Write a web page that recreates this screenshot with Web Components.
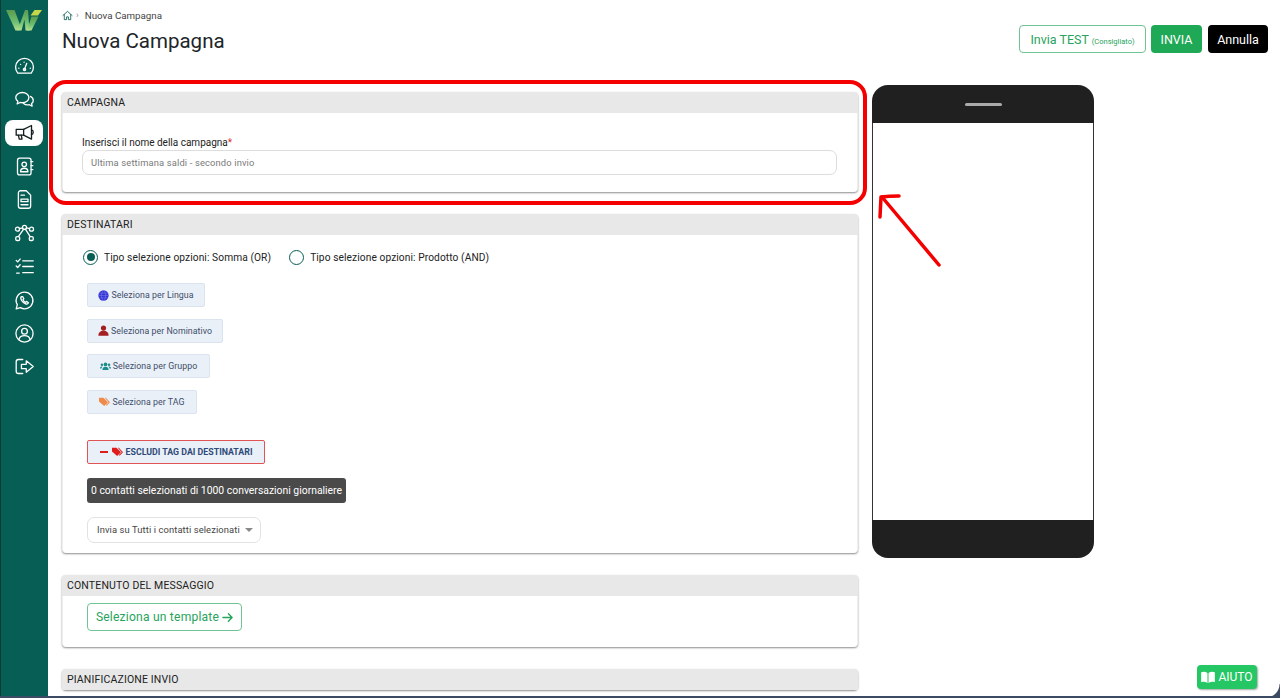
<!DOCTYPE html>
<html lang="it">
<head>
<meta charset="utf-8">
<title>Nuova Campagna</title>
<style>
  html, body { margin: 0; padding: 0; height: 698px; overflow: hidden; background: #fff; font-family: Roboto, "Liberation Sans", sans-serif; }
</style>
</head>
<body>
<app-shell>
  <side-nav slot="nav"></side-nav>
  <page-head></page-head>
  <div class="columns" style="display:flex;align-items:flex-start;gap:14px;">
    <div style="width:796px;flex:none;display:flex;flex-direction:column;gap:22px;padding-top:14px;">
      <ui-card title="CAMPAGNA"><campaign-name></campaign-name></ui-card>
      <ui-card title="DESTINATARI"><recipients-panel></recipients-panel></ui-card>
      <ui-card title="CONTENUTO DEL MESSAGGIO"><template-pick></template-pick></ui-card>
      <ui-card title="PIANIFICAZIONE INVIO"></ui-card>
    </div>
    <phone-preview></phone-preview>
  </div>
  <red-marks></red-marks>
  <help-button></help-button>
</app-shell>

<script>
class AppShell extends HTMLElement {
  constructor() {
    super();
    this.attachShadow({mode: 'open'}).innerHTML = `
      <style>
        :host { display: flex; width: 1280px; height: 698px; position: relative; overflow: hidden; background: #fff; }
        .nav { flex: none; width: 48px; }
        main { flex: 1; min-width: 0; padding: 0 12px 0 14px; height: 698px; overflow: hidden; }
        .edge { position: absolute; left: 0; right: 0; bottom: 0; height: 2px; background: #3c4a63; }
        .corner { position: absolute; right: 0; bottom: 0; width: 14px; height: 14px; background: #3c4a63; -webkit-mask: radial-gradient(circle at 0 0, transparent 13px, #000 14px); mask: radial-gradient(circle at 0 0, transparent 13px, #000 14px); }
      </style>
      <div class="nav"><slot name="nav"></slot></div>
      <main><slot></slot></main>
      <div class="edge"></div><div class="corner"></div>`;
  }
}

const NAV_ICONS = [
  // tachimetro
  '<path d="M4.300 19.500a10.200 10.200 0 1 1 15.400 0z"/><path d="M12 15l2.500-6.500"/><circle cx="12" cy="15.500" r="1.300"/><path d="M5.500 14h.1M7.500 9.500h.1M11.500 7h.1M18.500 14h.1"/>',
  // chat
  '<path d="M9.500 4c-4.200 0-7.500 2.600-7.500 5.800 0 1.700.9 3.200 2.400 4.300L3.600 17l3.400-1.600c.8.2 1.600.3 2.500.3 4.200 0 7.500-2.600 7.500-5.900S13.700 4 9.500 4z"/><path d="M18.800 8.500c1.900 1 3.200 2.600 3.200 4.500 0 1.400-.7 2.700-1.900 3.600l.6 3-3.200-1.600c-2.300.5-5 0-6.500-1.500"/>',
  // megafono
  '<path d="M2.500 8.500h8.500v6.500H2.500z"/><path d="M11 8.500L20 4v15.500L11 15"/><path d="M20 9c1.300.3 2 1.400 2 2.700s-.7 2.400-2 2.700"/><path d="M5 15l1 4.500h3.200L8.300 15"/>',
  // rubrica
  '<rect x="4" y="2.500" width="15.500" height="19" rx="2.500"/><circle cx="11.700" cy="9.500" r="2.600"/><path d="M7.500 18c0-2.800 1.800-4 4.200-4s4.200 1.200 4.200 4z"/><path d="M19.500 6.500h2M19.500 11h2M19.500 15.500h2"/>',
  // documento
  '<path d="M5 4.500A2.500 2.500 0 0 1 7.500 2H14l5 5v12.500a2.500 2.500 0 0 1-2.500 2.500h-9A2.500 2.500 0 0 1 5 19.500z"/><path d="M8 7h4M8 11.500h8v3H8zM8 18h8"/>',
  // rete
  '<circle cx="4" cy="7" r="2.300"/><circle cx="12" cy="5" r="2.300"/><circle cx="20" cy="7" r="2.300"/><rect x="2" y="15.500" width="4.500" height="4.500" rx="1.500"/><rect x="17.500" y="15.500" width="4.500" height="4.500" rx="1.500"/><path d="M6.200 6.500l3.600-1M14.200 5.500l3.600 1M13 7l5.500 8.500M11 7l-6 8.500"/>',
  // checklist
  '<path d="M2.500 5l1.700 1.700L7 3.500M2.500 11.500l1.700 1.700L7 10M3 19.500h3"/><path d="M10 5.500h12M10 12h12M10 19h12"/>',
  // whatsapp
  '<path d="M12 2.500a9.500 9.500 0 0 0-8.200 14.300L2.500 21.500l4.800-1.300A9.500 9.500 0 1 0 12 2.500z"/><path d="M8.500 7.500c-1 1-1 2.600.2 4.500 1.200 2 3 3.500 5 4 1.300.3 2.300-.2 2.800-1.500l-2.200-1.500-1 1c-1.200-.4-2.500-1.700-3-3l.9-1-1.300-2.500z"/>',
  // profilo
  '<circle cx="12" cy="12" r="9.800"/><circle cx="12" cy="9.500" r="3.300"/><path d="M5.500 19c.8-3 3.300-4.500 6.500-4.500s5.700 1.500 6.500 4.500"/>',
  // esci
  '<path d="M10 4H5a2.500 2.500 0 0 0-2.500 2.500v11A2.500 2.500 0 0 0 5 20h5"/><path d="M8.500 9.500h5.500V5.500l8 6.500-8 6.500v-4H8.500z"/>'
];

class SideNav extends HTMLElement {
  constructor() {
    super();
    const items = NAV_ICONS.map((d, i) => `
      <div class="item ${i === 2 ? 'on' : ''}"><svg viewBox="0 0 24 24" width="21" height="21">${d}</svg></div>`).join('');
    this.attachShadow({mode: 'open'}).innerHTML = `
      <style>
        :host { display: block; width: 48px; height: 698px; box-sizing: border-box; background: #075e54; border-left: 1px solid #0c3a35; }
        .logo { height: 33px; padding: 9px 0 0 5px; box-sizing: border-box; }
        .list { display: flex; flex-direction: column; align-items: center; padding-top: 20px; gap: 0; margin-left: -1px; }
        .item { width: 38px; height: 26px; display: flex; align-items: center; justify-content: center; border-radius: 8px; margin-bottom: 7.450px; }
        .item.on { background: #fff; }
        svg { fill: none; stroke: #fff; stroke-width: 1.500; stroke-linecap: round; stroke-linejoin: round; }
        .on svg { stroke: #12201d; }
      </style>
      <div class="logo">
        <svg viewBox="0 0 36 22" width="36" height="22" style="stroke:none;display:block">
          <defs><linearGradient id="g" x1="0" y1="0" x2="0" y2="1">
            <stop offset="0" stop-color="#5a9a4e"/><stop offset=".6" stop-color="#6fbf72"/><stop offset="1" stop-color="#b4e08c"/></linearGradient></defs>
          <path fill="url(#g)" d="M0 1h8.500l6 16-2 4.500h-3z"/>
          <path fill="url(#g)" d="M11.500 21.500l7.500-20.500h3l1.500 20.500h-4l-1-11-3 11z"/>
          <path fill="url(#g)" d="M21 21.500h4.500l7-14h-7z"/>
          <path fill="#c4d84a" d="M28.500 1h7.500l-4 5.500h-7.500z"/>
        </svg>
      </div>
      <div class="list">${items}</div>`;
  }
}

class PageHead extends HTMLElement {
  constructor() {
    super();
    this.attachShadow({mode: 'open'}).innerHTML = `
      <style>
        :host { display: flex; justify-content: space-between; height: 78px; box-sizing: border-box; color: #212529; }
        .crumb { display: flex; align-items: center; gap: 3px; height: 12px; margin-top: 9px; font-size: 9.750px; color: #444; }
        .crumb svg { fill: none; stroke: #075e54; stroke-width: 1.800; stroke-linejoin: round; stroke-linecap: round; }
        .crumb i { font-style: normal; color: #888; margin-right: 3px; font-size: 9px; }
        h1 { margin: 7px 0 0; font-size: 20.500px; line-height: 26px; font-weight: 400; }
        .acts { display: flex; align-items: flex-start; padding-top: 25px; }
        button { font: 400 12.500px Roboto, "Liberation Sans", sans-serif; height: 28px; border-radius: 4px; padding: 0; box-sizing: border-box; }
        .test { width: 127px; background: #fff; color: #27a35b; border: 1px solid #6fc394; margin-right: 5px; }
        .test small { font-size: 7.500px; }
        .go { width: 51px; background: #1fa855; color: #fff; border: 0; margin-right: 6px; }
        .no { width: 60px; background: #000; color: #fff; border: 0; }
      </style>
      <div>
        <div class="crumb">
          <svg viewBox="0 0 24 24" width="11" height="11"><path d="M2 12L12 3l10 9M5 10v11h5v-6h4v6h5V10"/></svg><i>›</i><span>Nuova Campagna</span>
        </div>
        <h1>Nuova Campagna</h1>
      </div>
      <div class="acts">
        <button class="test">Invia TEST <small>(Consigliato)</small></button>
        <button class="go">INVIA</button>
        <button class="no">Annulla</button>
      </div>`;
  }
}

class UiCard extends HTMLElement {
  constructor() {
    super();
    this.attachShadow({mode: 'open'}).innerHTML = `
      <style>
        :host { display: block; background: #fff; border-radius: 4px; border: 1px solid #eee; border-top: 0; border-bottom: 0; box-shadow: 0 1px 2px rgba(0,0,0,.45); box-sizing: border-box; }
        header { height: 21px; line-height: 21px; margin: 0 -1px; padding-left: 5px; background: #e8e8e8; border-radius: 4px 4px 0 0; font-size: 10.500px; letter-spacing: .15px; color: #222; }
      </style>
      <header></header>
      <slot></slot>`;
    this.shadowRoot.querySelector('header').textContent = this.getAttribute('title');
  }
}

class CampaignName extends HTMLElement {
  constructor() {
    super();
    this.attachShadow({mode: 'open'}).innerHTML = `
      <style>
        :host { display: block; height: 79px; box-sizing: border-box; padding: 24px 20px 0 19px; }
        label { display: block; font-size: 10px; line-height: 12px; color: #222; }
        b { color: #d33; font-weight: 400; }
        .field { margin-top: 1px; height: 25px; box-sizing: border-box; border: 1px solid #ddd; border-radius: 7px; padding: 0 8px; line-height: 23px; font-size: 9.350px; color: #7a7a7a; letter-spacing: .15px; }
      </style>
      <label>Inserisci il nome della campagna<b>*</b></label>
      <div class="field">Ultima settimana saldi - secondo invio</div>`;
  }
}

class RadioOpt extends HTMLElement {
  constructor() {
    super();
    this.attachShadow({mode: 'open'}).innerHTML = `
      <style>
        :host { display: inline-flex; align-items: center; gap: 6px; font-size: 10.200px; color: #222; letter-spacing: .09px; }
        .r { width: 15px; height: 15px; box-sizing: border-box; border: 1.500px solid #075e54; border-radius: 50%; display: flex; align-items: center; justify-content: center; }
        :host([on]) .r::after { content: ""; width: 8px; height: 8px; border-radius: 50%; background: #075e54; }
      </style>
      <span class="r"></span><slot></slot>`;
  }
}

const PICK_ICONS = {
  globe: '<circle cx="8" cy="8" r="7.500" fill="#3535d8"/><path d="M.5 8h15M8 .5c-4 4-4 11 0 15M8 .5c4 4 4 11 0 15M2 4.500h12M2 11.500h12" stroke="#9aa0ee" stroke-width=".5" fill="none"/>',
  user: '<circle cx="8" cy="4.500" r="3.800" fill="#a32020"/><path d="M.5 15.500c0-4.500 3-7 7.500-7s7.500 2.500 7.500 7z" fill="#a32020"/>',
  group: '<g fill="#1c8c8c"><circle cx="8" cy="5" r="2.700"/><circle cx="2.800" cy="5.500" r="1.800"/><circle cx="13.200" cy="5.500" r="1.800"/><path d="M3.500 13c0-3 2-4.500 4.500-4.500s4.500 1.500 4.500 4.500z"/><path d="M0 11c0-2 1-3 2.500-3 .5 0 1 .1 1.300.3C2.800 9 2.300 10 2.200 11zM16 11c0-2-1-3-2.500-3-.5 0-1 .1-1.300.3 1 .7 1.500 1.700 1.600 2.700z"/></g>',
  tag: '<path d="M0 2.500h6.500L13 9l-5.500 5.500L0 8z" fill="#f08a4b"/><path d="M8.500 2.500h1.500L16 9l-5 5-1-1 4-4z" fill="#f08a4b"/>'
};

class PickButton extends HTMLElement {
  constructor() {
    super();
    const ic = this.getAttribute('icon');
    this.attachShadow({mode: 'open'}).innerHTML = `
      <style>
        :host { display: inline-flex; align-items: center; justify-content: center; gap: 2px; height: 24px; box-sizing: border-box; background: #eaf0f8; border: 1px solid #dbe3ee; border-radius: 2px; font-size: 8.800px; letter-spacing: .05px; color: #3e4d68; }
      </style>
      <svg viewBox="0 0 16 16" width="11" height="11">${PICK_ICONS[ic]}</svg><slot></slot>`;
  }
}

class RecipientsPanel extends HTMLElement {
  constructor() {
    super();
    this.attachShadow({mode: 'open'}).innerHTML = `
      <style>
        :host { display: flex; flex-direction: column; align-items: flex-start; height: 318px; box-sizing: border-box; padding: 14px 0 0 24px; }
        .radios { display: flex; gap: 18px; height: 16px; margin-left: -4px; margin-bottom: 18px; }
        .picks { display: flex; flex-direction: column; align-items: flex-start; gap: 11.500px; }
        .excl { margin-top: 26px; width: 178px; height: 24px; box-sizing: border-box; display: flex; align-items: center; justify-content: center; gap: 3px; background: #eaf0f8; border: 1px solid #e05454; border-radius: 2px; font-size: 8.800px; font-weight: 700; color: #2f4a78; }
        .dash { width: 8px; height: 2px; background: #e01d1d; margin-right: 1px; }
        .count { margin-top: 14px; height: 25px; line-height: 25px; padding: 0 4px; background: #4a4a4a; color: #fff; border-radius: 3px; font-size: 10.400px; }
        .send { margin-top: 14px; width: 174px; height: 26px; box-sizing: border-box; display: flex; align-items: center; gap: 4px; padding-left: 9px; border: 1px solid #e2e2e2; border-radius: 7px; font-size: 9.400px; letter-spacing: .1px; color: #444; }
        .caret { width: 0; height: 0; border: 4px solid transparent; border-top: 4px solid #8a8a8a; border-bottom: 0; margin-left: 1px; }
      </style>
      <div class="radios">
        <radio-opt on>Tipo selezione opzioni: Somma (OR)</radio-opt>
        <radio-opt>Tipo selezione opzioni: Prodotto (AND)</radio-opt>
      </div>
      <div class="picks">
        <pick-button icon="globe" style="width:118px">Seleziona per Lingua</pick-button>
        <pick-button icon="user" style="width:136px">Seleziona per Nominativo</pick-button>
        <pick-button icon="group" style="width:123px">Seleziona per Gruppo</pick-button>
        <pick-button icon="tag" style="width:110px">Seleziona per TAG</pick-button>
      </div>
      <div class="excl"><span class="dash"></span><svg viewBox="0 0 16 16" width="11" height="11"><path d="M0 2.500h6.500L13 9l-5.500 5.500L0 8z" fill="#e01d1d"/><path d="M8.500 2.500h1.500L16 9l-5 5-1-1 4-4z" fill="#e01d1d"/></svg><span>ESCLUDI TAG DAI DESTINATARI</span></div>
      <div class="count">0 contatti selezionati di 1000 conversazioni giornaliere</div>
      <div class="send">Invia su Tutti i contatti selezionati <span class="caret"></span></div>`;
  }
}

class TemplatePick extends HTMLElement {
  constructor() {
    super();
    this.attachShadow({mode: 'open'}).innerHTML = `
      <style>
        :host { display: block; height: 51px; box-sizing: border-box; padding: 7px 0 0 24px; }
        .b { width: 155px; height: 28px; box-sizing: border-box; display: flex; align-items: center; justify-content: center; gap: 3px; border: 1px solid #6fc394; border-radius: 4px; color: #27a35b; font-size: 12.100px; letter-spacing: .2px; }
        svg { fill: none; stroke: #27a35b; stroke-width: 1.500; stroke-linecap: round; stroke-linejoin: round; }
      </style>
      <div class="b">Seleziona un template <svg viewBox="0 0 12 12" width="11" height="11"><path d="M1 6h10M7 2l4 4-4 4"/></svg></div>`;
  }
}

class PhonePreview extends HTMLElement {
  constructor() {
    super();
    this.attachShadow({mode: 'open'}).innerHTML = `
      <style>
        :host { display: flex; flex-direction: column; flex: none; width: 222px; height: 473px; margin-top: 7px; box-sizing: border-box; }
        .top { height: 38px; background: #202020; border-radius: 16px 16px 0 0; display: flex; justify-content: center; padding-top: 18px; box-sizing: border-box; }
        .top span { width: 37px; height: 3px; background: #aaa; border-radius: 2px; }
        .screen { flex: 1; background: #fff; border-left: 1.500px solid #333; border-right: 1.500px solid #333; }
        .bot { height: 38px; background: #202020; border-radius: 0 0 16px 16px; }
      </style>
      <div class="top"><span></span></div>
      <div class="screen"></div>
      <div class="bot"></div>`;
  }
}

class RedMarks extends HTMLElement {
  constructor() {
    super();
    this.attachShadow({mode: 'open'}).innerHTML = `
      <style>
        :host { display: block; }
        .box { position: absolute; left: 49px; top: 80px; width: 818px; height: 125px; box-sizing: border-box; border: 4px solid #f40000; border-radius: 17px; }
        svg { position: absolute; left: 870px; top: 186px; }
      </style>
      <div class="box"></div>
      <svg width="80" height="90" viewBox="0 0 80 90" fill="none" stroke="#f40000" stroke-width="3.500" stroke-linecap="round" stroke-linejoin="round">
        <path d="M69 79L12 11"/>
        <path d="M11 11Q19 10 29 10M11 11L10 31"/>
      </svg>`;
  }
}

class HelpButton extends HTMLElement {
  constructor() {
    super();
    this.attachShadow({mode: 'open'}).innerHTML = `
      <style>
        :host { position: absolute; right: 23px; bottom: 9px; width: 60px; height: 24px; display: flex; align-items: center; justify-content: center; gap: 3px; background: #25c765; color: #fff; border-radius: 4px; font-size: 12px; box-shadow: 1px 1px 2px rgba(0,0,0,.35); }
      </style>
      <svg viewBox="0 0 16 14" width="14" height="12" fill="#fff"><path d="M0 1.500c2.500-1 5-.8 7.400.7V14C5 12.500 2.500 12.300 0 13zM16 1.500c-2.500-1-5-.8-7.400.7V14c2.400-1.500 4.900-1.700 7.400-1z"/></svg><span>AIUTO</span>`;
  }
}

customElements.define('app-shell', AppShell);
customElements.define('side-nav', SideNav);
customElements.define('page-head', PageHead);
customElements.define('ui-card', UiCard);
customElements.define('campaign-name', CampaignName);
customElements.define('radio-opt', RadioOpt);
customElements.define('pick-button', PickButton);
customElements.define('recipients-panel', RecipientsPanel);
customElements.define('template-pick', TemplatePick);
customElements.define('phone-preview', PhonePreview);
customElements.define('red-marks', RedMarks);
customElements.define('help-button', HelpButton);
</script>
</body>
</html>
